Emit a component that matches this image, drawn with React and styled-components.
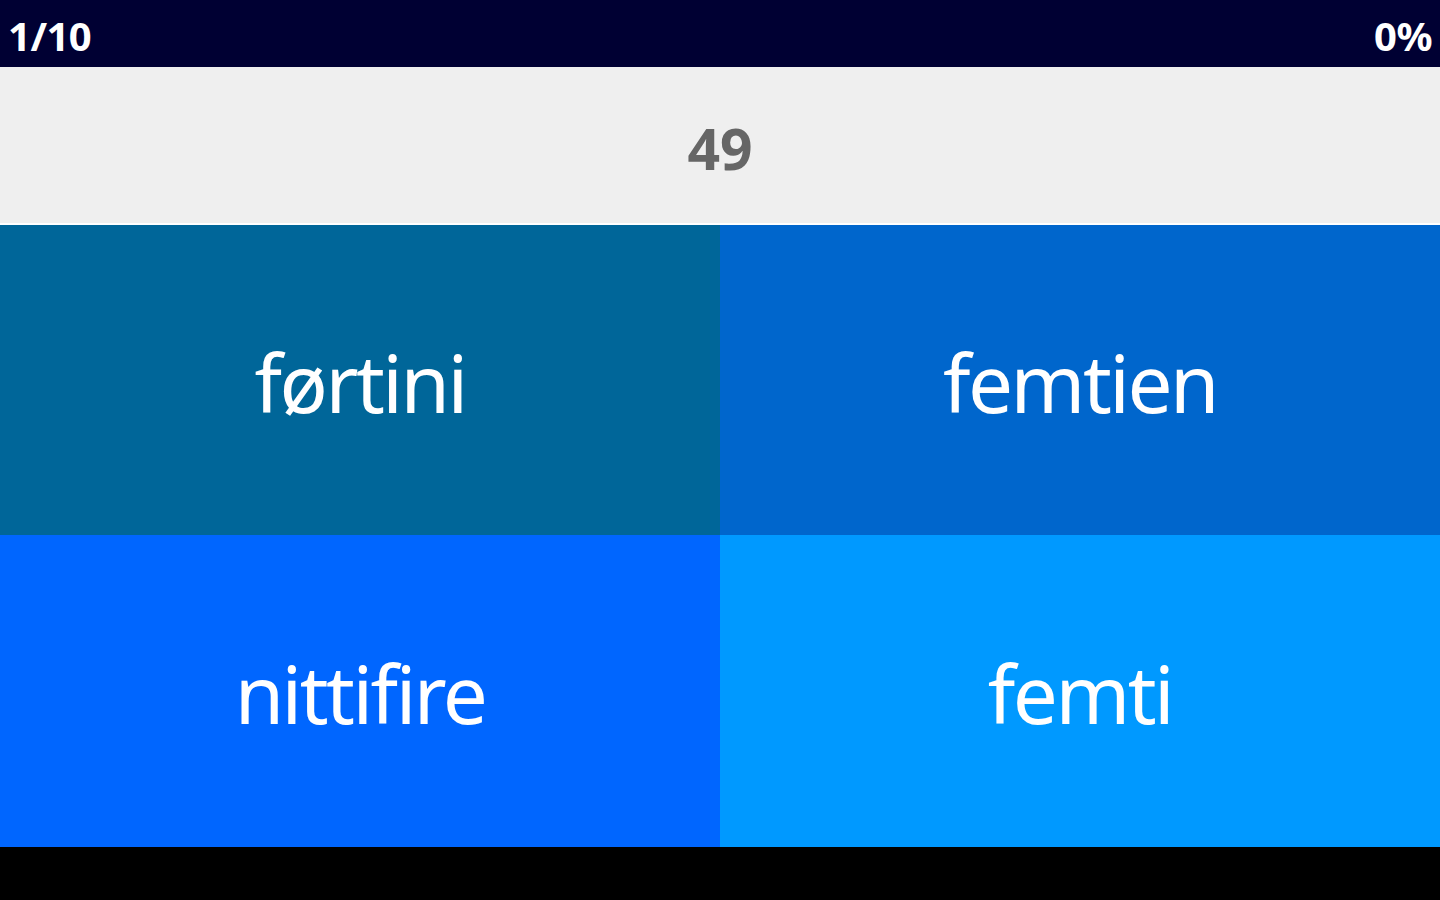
import styled, { createGlobalStyle } from 'styled-components';

const GlobalStyle = createGlobalStyle`
	html, body {
		margin: 0;
		padding: 0;
		height: 100%;
		background: #000;
	}
	#root {
		height: 100%;
	}
`;

const answers = [
	{ word: "førtini", color: "#006699" },
	{ word: "femtien", color: "#0066cc" },
	{ word: "nittifire", color: "#0066ff" },
	{ word: "femti", color: "#0099ff" },
];

export default function App () {
	return (
		<>
			<GlobalStyle />
			<Screen>
				<StatusBar>
					<span>1/10</span>
					<span>0%</span>
				</StatusBar>
				<Question>49</Question>
				<AnswerGrid>
					{answers.map(a => (
						<AnswerTile key={a.word} $bg={a.color}>{a.word}</AnswerTile>
					))}
				</AnswerGrid>
			</Screen>
		</>
	);
}

const Screen = styled.div`
	height: 900px;
	display: flex;
	flex-direction: column;
	background: #000;
	font-family: 'Noto Sans', 'Open Sans', sans-serif;
`;

const StatusBar = styled.div`
	height: 67px;
	background: #000033;
	color: #fff;
	display: flex;
	justify-content: space-between;
	align-items: center;
	padding: 4px 8px 0 8px;
	box-sizing: border-box;
	font-size: 40px;
	font-weight: 700;
	letter-spacing: -0.5px;
`;

const Question = styled.div`
	height: 158px;
	background: #efefef;
	border-bottom: 2px solid #fff;
	color: #666;
	display: flex;
	justify-content: center;
	align-items: center;
	padding-top: 6px;
	box-sizing: border-box;
	font-size: 57px;
	font-weight: 700;
`;

const AnswerGrid = styled.div`
	height: 622px;
	display: grid;
	grid-template-columns: 720px 720px;
	grid-template-rows: 310px 312px;
`;

const AnswerTile = styled.div`
	background: ${p => p.$bg};
	color: #fff;
	display: flex;
	justify-content: center;
	align-items: center;
	font-size: 80px;
	letter-spacing: -2.5px;
	padding-top: 2px;
	box-sizing: border-box;
`;
